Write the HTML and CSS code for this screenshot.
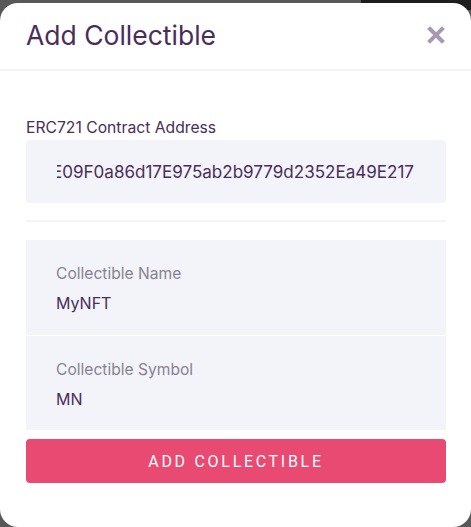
FILE: index.html
```html
<!DOCTYPE html>
<html>
<head>
<meta charset="utf-8">
<link rel="stylesheet" href="styles.css">
</head>
<body>
<div class="backdrop">
  <div class="backdrop-dark"></div>
</div>
<div class="modal">
  <div class="modal-header">
    <h1 class="modal-title">Add Collectible</h1>
    <svg class="close-icon" width="18" height="18" viewBox="0 0 18 18">
      <path d="M3 3 L15 15 M15 3 L3 15" stroke="#a899b0" stroke-width="4" stroke-linecap="square"/>
    </svg>
  </div>
  <div class="modal-body">
    <label class="field-label">ERC721 Contract Address</label>
    <div class="address-input">
      <span class="address-text">E09F0a86d17E975ab2b9779d2352Ea49E217</span>
    </div>
    <div class="divider"></div>
    <div class="info-box">
      <div class="info-row">
        <div class="info-label">Collectible Name</div>
        <div class="info-value">MyNFT</div>
      </div>
      <div class="info-row">
        <div class="info-label">Collectible Symbol</div>
        <div class="info-value">MN</div>
      </div>
    </div>
    <button class="add-button">ADD COLLECTIBLE</button>
  </div>
</div>
</body>
</html>
```
FILE: styles.css
```css
html, body {
  margin: 0;
  padding: 0;
}
body {
  width: 471px;
  height: 527px;
  overflow: hidden;
  background: #585858;
  font-family: "Inter", "Liberation Sans", sans-serif;
  position: relative;
}
.backdrop {
  position: absolute;
  top: 0;
  left: 0;
  right: 0;
  height: 10px;
}
.backdrop-dark {
  position: absolute;
  right: 0;
  top: 0;
  width: 110px;
  height: 10px;
  background: #1e1e1e;
}
.modal {
  position: relative;
  margin-top: 3px;
  height: 524px;
  background: #ffffff;
  border-radius: 18px;
  display: flex;
  flex-direction: column;
}
.modal-header {
  height: 66px;
  border-bottom: 2px solid #f3f2f8;
  display: flex;
  align-items: center;
  justify-content: space-between;
  padding: 0 26px;
}
.modal-title {
  margin: 0;
  font-size: 26.5px;
  font-weight: 400;
  color: #4a2d5a;
  position: relative;
  top: -1px;
}
.close-icon {
  display: block;
  position: relative;
  top: -1px;
}
.modal-body {
  padding: 47px 25px 0 26px;
  display: flex;
  flex-direction: column;
}
.field-label {
  font-size: 15.7px;
  color: #4a2d5a;
  line-height: 20px;
  margin-bottom: 2px;
}
.address-input {
  height: 63px;
  background: #f3f4f9;
  border-radius: 4px;
  display: flex;
  align-items: center;
  padding-left: 31px;
  overflow: hidden;
}
.address-text {
  font-size: 17.05px;
  color: #4a2d5a;
  white-space: nowrap;
  margin-left: -5px;
  clip-path: inset(0 0 0 5px);
}
.divider {
  height: 2px;
  background: #f3f3f8;
  margin: 17px 0 18px;
}
.info-box {
  background: #f3f4f9;
  height: 190px;
  display: flex;
  flex-direction: column;
}
.info-row {
  padding: 25px 30px 0;
  height: 70px;
  margin-right: 26px;
}
.info-row + .info-row {
  border-top: 1px solid #ffffff;
  margin-right: 0;
}
.info-label {
  font-size: 15.6px;
  color: #878291;
  line-height: 18px;
}
.info-value {
  font-size: 16px;
  color: #4a2d5a;
  line-height: 20px;
  margin-top: 10px;
}
.add-button {
  margin-top: 9px;
  height: 44px;
  background: #e84a72;
  border: none;
  border-radius: 4px;
  color: #ffffff;
  font-family: "Roboto", "Liberation Sans", sans-serif;
  font-size: 16px;
  letter-spacing: 2.7px;
  font-weight: 400;
  padding-top: 1px;
}
```
